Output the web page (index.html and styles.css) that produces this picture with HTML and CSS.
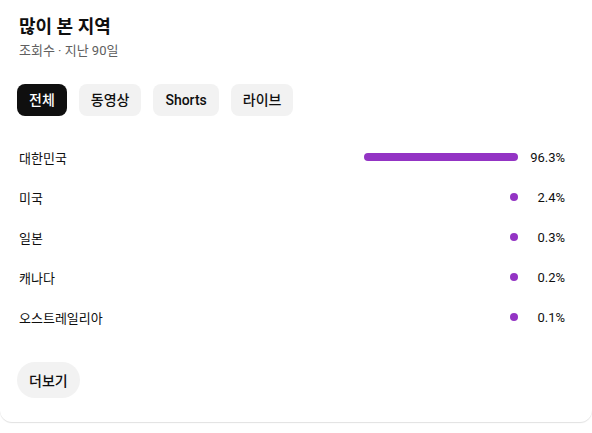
FILE: index.html
```html
<!DOCTYPE html>
<html lang="ko">
<head>
<meta charset="utf-8">
<link rel="stylesheet" href="styles.css">
</head>
<body>
<div class="card">
  <h2 class="title">많이 본 지역</h2>
  <div class="subtitle">조회수 · 지난 90일</div>
  <div class="chips">
    <button class="chip active">전체</button>
    <button class="chip">동영상</button>
    <button class="chip">Shorts</button>
    <button class="chip">라이브</button>
  </div>
  <ul class="rows">
    <li class="row"><span class="label">대한민국</span><span class="track"><span class="bar" style="width:96.3%"></span></span><span class="pct">96.3%</span></li>
    <li class="row"><span class="label">미국</span><span class="track"><span class="bar" style="width:2.4%"></span></span><span class="pct">2.4%</span></li>
    <li class="row"><span class="label">일본</span><span class="track"><span class="bar" style="width:0.3%"></span></span><span class="pct">0.3%</span></li>
    <li class="row"><span class="label">캐나다</span><span class="track"><span class="bar" style="width:0.2%"></span></span><span class="pct">0.2%</span></li>
    <li class="row"><span class="label">오스트레일리아</span><span class="track"><span class="bar" style="width:0.1%"></span></span><span class="pct">0.1%</span></li>
  </ul>
  <button class="more">더보기</button>
</div>
</body>
</html>
```
FILE: styles.css
```css
* { box-sizing: border-box; }
html, body { margin: 0; padding: 0; background: #ffffff; }
body {
  font-family: Roboto, "Noto Sans CJK KR", "Noto Sans", sans-serif;
  color: #0f0f0f;
  width: 592px;
  height: 433px;
  overflow: hidden;
}
.card {
  width: 592px;
  height: 422px;
  background: #fff;
  border-radius: 0 0 12px 12px;
  box-shadow: 0 1px 1px rgba(0, 0, 0, 0.12);
  padding: 15px 27px 24px 19px;
  display: flex;
  flex-direction: column;
  align-items: flex-start;
}
.title {
  margin: 0;
  font-size: 18px;
  line-height: 24px;
  font-weight: 700;
}
.subtitle {
  margin-top: 3px;
  font-size: 13px;
  line-height: 18px;
  color: #606060;
}
.chips {
  display: flex;
  gap: 12px;
  margin-top: 24px;
  margin-left: -2px;
}
.chip {
  font-family: inherit;
  height: 32px;
  padding: 0 12px;
  border: none;
  border-radius: 8px;
  background: #f2f2f2;
  color: #0f0f0f;
  font-size: 14px;
  font-weight: 500;
  line-height: 32px;
}
.chip.active {
  background: #0f0f0f;
  color: #fff;
}
.rows {
  list-style: none;
  margin: 21px 0 0 0;
  padding: 0;
  width: 100%;
}
.row {
  display: flex;
  align-items: center;
  height: 40px;
  font-size: 13px;
}
.label { flex: 1; }
.track {
  width: 160px;
  display: flex;
  justify-content: flex-end;
}
.bar {
  height: 8px;
  min-width: 8px;
  border-radius: 4px;
  background: #9334c4;
}
.pct {
  width: 47px;
  text-align: right;
}
.more {
  font-family: inherit;
  margin-top: 25px;
  margin-left: -2px;
  height: 36px;
  padding: 0 12px;
  border: none;
  border-radius: 18px;
  background: #f2f2f2;
  color: #0f0f0f;
  font-size: 14px;
  font-weight: 500;
}
```
